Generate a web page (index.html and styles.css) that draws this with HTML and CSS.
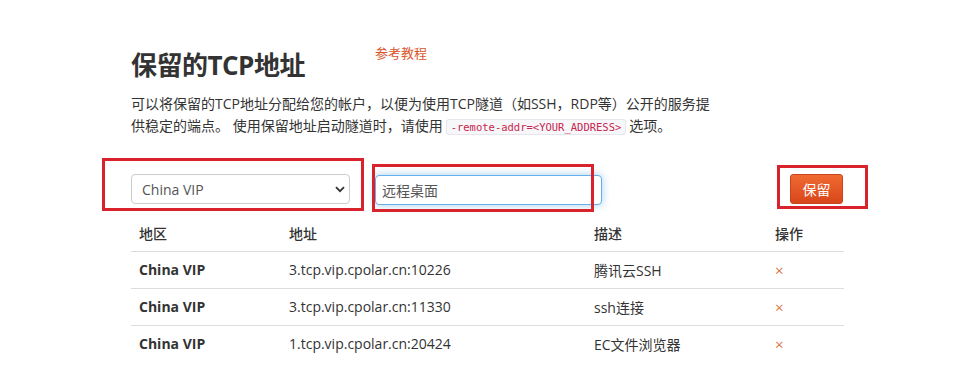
FILE: index.html
```html
<!DOCTYPE html>
<html lang="zh-CN">
<head>
  <meta charset="UTF-8" />
  <title>保留的TCP地址</title>
  <link rel="stylesheet" href="styles.css">
</head>
<body>
  <div class="page">
    <div class="title-row">
      <h1>保留的TCP地址</h1>
      <a class="guide-link" href="#">参考教程</a>
    </div>
    <p class="intro">可以将保留的TCP地址分配给您的帐户，以便为使用TCP隧道（如SSH，RDP等）公开的服务提供稳定的端点。 使用保留地址启动隧道时，请使用<code>-remote-addr=&lt;YOUR_ADDRESS&gt;</code>选项。</p>

    <form class="reserve-form" onsubmit="return false">
      <div class="select-wrap">
        <select class="region-select">
          <option>China VIP</option>
        </select>
        <svg class="chevron" width="10" height="7" viewBox="0 0 10 7"><path d="M1 1.2 5 5.2l4-4" fill="none" stroke="#333" stroke-width="1.8"/></svg>
      </div>
      <input class="desc-input" type="text" value="远程桌面" />
      <button class="reserve-btn" type="submit">保留</button>

      <span class="mark mark-select"></span>
      <span class="mark mark-input"></span>
      <span class="mark mark-btn"></span>
    </form>

    <table class="addr-table">
      <thead>
        <tr>
          <th class="col-region">地区</th>
          <th class="col-addr">地址</th>
          <th class="col-desc">描述</th>
          <th class="col-op">操作</th>
        </tr>
      </thead>
      <tbody>
        <tr>
          <td class="region">China VIP</td>
          <td>3.tcp.vip.cpolar.cn:10226</td>
          <td>腾讯云SSH</td>
          <td><a class="remove" href="#">×</a></td>
        </tr>
        <tr>
          <td class="region">China VIP</td>
          <td>3.tcp.vip.cpolar.cn:11330</td>
          <td>ssh连接</td>
          <td><a class="remove" href="#">×</a></td>
        </tr>
        <tr>
          <td class="region">China VIP</td>
          <td>1.tcp.vip.cpolar.cn:20424</td>
          <td>EC文件浏览器</td>
          <td><a class="remove" href="#">×</a></td>
        </tr>
      </tbody>
    </table>
  </div>
</body>
</html>
```

FILE: styles.css
```css
* {
  margin: 0;
  padding: 0;
  box-sizing: border-box;
}

body {
  background: #fff;
  color: #333;
  font-family: "Open Sans", "Noto Sans CJK SC", sans-serif;
  font-size: 14px;
}

.page {
  width: 713px;
  margin-left: 131px;
  padding-top: 40px;
}

.title-row {
  display: flex;
  align-items: flex-start;
}

h1 {
  font-size: 26px;
  font-weight: 700;
  line-height: 50px;
  color: #333;
  letter-spacing: -0.5px;
}

.guide-link {
  margin-left: 70px;
  margin-top: 3px;
  font-size: 13px;
  color: #d9542a;
  text-decoration: none;
}

.intro {
  width: 590px;
  margin-top: 3px;
  font-size: 14px;
  line-height: 22px;
  color: #333;
}

code {
  font-family: "DejaVu Sans Mono", monospace;
  font-size: 10.5px;
  color: #c7254e;
  background: #f7f7f9;
  border: 1px solid #e6e6ec;
  border-radius: 3px;
  padding: 1px 4px;
  margin: 0 3px;
}

.reserve-form {
  position: relative;
  display: flex;
  align-items: center;
  margin-top: 35px;
  height: 32px;
}

.select-wrap {
  position: relative;
  width: 219px;
}

.region-select {
  appearance: none;
  width: 100%;
  height: 30px;
  border: 1px solid #ccc;
  border-radius: 4px;
  background: #fff;
  padding-left: 10px;
  font-family: inherit;
  font-size: 14px;
  color: #555;
}

.chevron {
  position: absolute;
  right: 5px;
  top: 12px;
}

.desc-input {
  width: 227px;
  height: 30px;
  margin-left: 25px;
  margin-top: 2px;
  border: 1px solid #66afe9;
  border-radius: 4px;
  padding-left: 6px;
  font-family: inherit;
  font-size: 14px;
  color: #555;
  box-shadow: 0 0 8px rgba(102, 175, 233, 0.6);
  outline: none;
}

.reserve-btn {
  width: 53px;
  height: 30px;
  margin-left: auto;
  margin-right: 1px;
  border: 1px solid #c8441b;
  border-radius: 3px;
  background: linear-gradient(#f06a32, #d8461b);
  color: #fff;
  font-family: inherit;
  font-size: 14px;
  cursor: pointer;
}

/* annotation boxes */
.mark {
  position: absolute;
  border: 3px solid #d8222c;
  pointer-events: none;
}

.mark-select {
  left: -29px;
  top: -15px;
  width: 262px;
  height: 53px;
}

.mark-input {
  left: 241px;
  top: -9px;
  width: 222px;
  height: 48px;
}

.mark-btn {
  left: 646px;
  top: -8px;
  width: 91px;
  height: 44px;
}

.addr-table {
  width: 100%;
  margin-top: 10px;
  border-collapse: collapse;
}

.addr-table th,
.addr-table td {
  text-align: left;
  padding: 0 8px;
  height: 37px;
  border-top: 1px solid #ddd;
  color: #333;
}

.addr-table th {
  font-weight: 500;
  border-top: none;
  border-bottom: 1px solid #ddd;
  height: 36px;
}

.addr-table thead + tbody tr:first-child td {
  border-top: none;
}

.col-region { width: 150px; }
.col-addr { width: 305px; }
.col-desc { width: 181px; }
.col-op { width: 77px; }

.region {
  font-weight: 700;
}

.remove {
  color: #d9773f;
  text-decoration: none;
  font-size: 15px;
}
```
